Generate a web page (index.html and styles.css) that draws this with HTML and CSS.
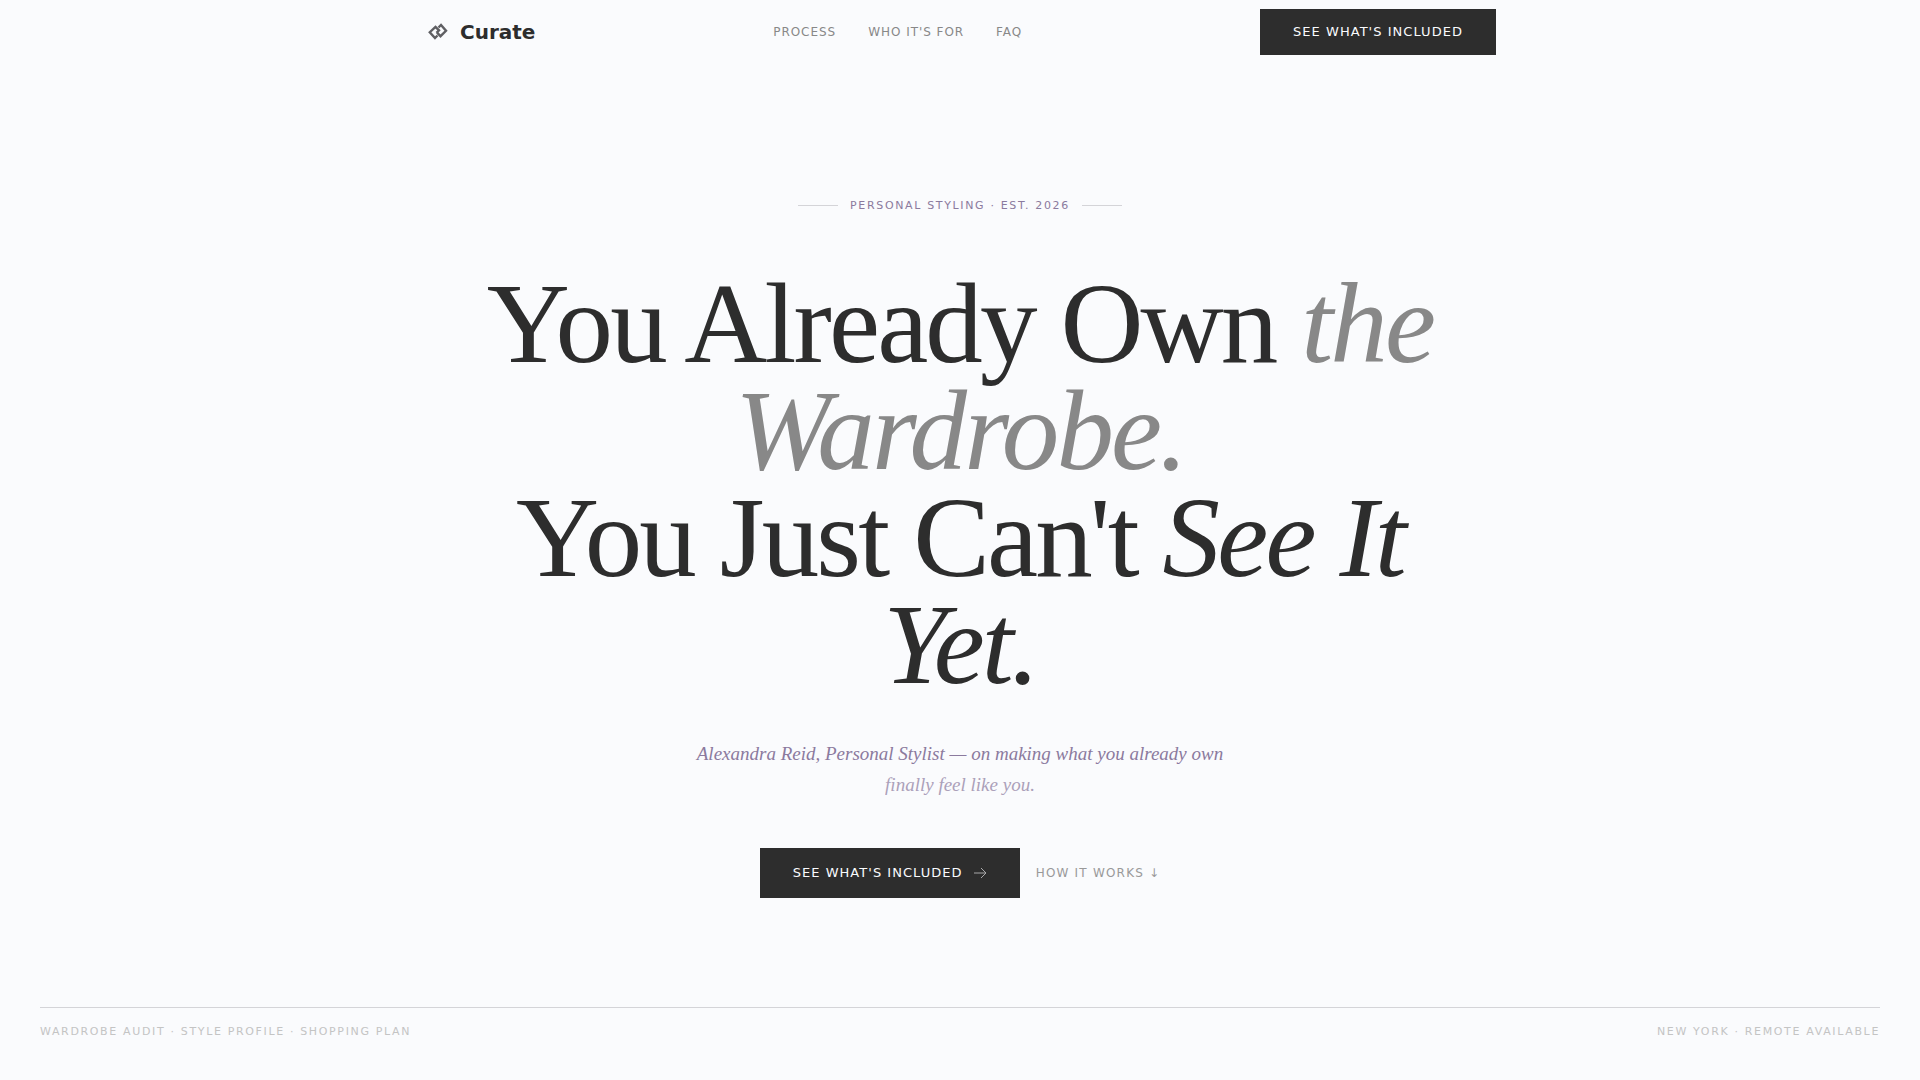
FILE: index.html
```html
<!DOCTYPE html>
<html lang="en">
<head>
  <meta charset="UTF-8">
  <meta name="viewport" content="width=device-width, initial-scale=1.0">
  <title>Curate - Personal Styling</title>
  <link rel="stylesheet" href="styles.css">
</head>
<body>

  <header class="header">
    <div class="header-inner">
      <a href="#" class="logo">
        <svg class="logo-icon" viewBox="0 0 28 28" fill="none" stroke="#5f5f63" stroke-width="2.4" aria-hidden="true">
          <path d="M13.5 17.5 L11 20 L5.8 14.2 L11.5 8.8 L15 12.3 L12.5 14.8"/>
          <path d="M14.5 9.5 L17 7 L22 12.8 L16.5 18.2 L13 14.7"/>
        </svg>
        <span>Curate</span>
      </a>
      <nav class="nav">
        <a href="#process">Process</a>
        <a href="#who">Who it's for</a>
        <a href="#faq">FAQ</a>
      </nav>
      <button type="button" class="btn">See what's included</button>
    </div>
  </header>

  <main class="hero">
    <p class="eyebrow">Personal Styling · Est. 2026</p>
    <h1>You Already Own <em class="muted">the Wardrobe.</em><br>You Just Can't <em>See It Yet.</em></h1>
    <p class="tagline">Alexandra Reid, Personal Stylist — on making what you already own <span>finally feel like you.</span></p>
    <div class="actions">
      <button type="button" class="btn btn-large">
        See what's included
        <svg class="arrow" viewBox="0 0 14 14" fill="none" stroke="currentColor" aria-hidden="true">
          <path d="M1 7 H13 M8 2 L13 7 L8 12"/>
        </svg>
      </button>
      <a href="#process" class="how-link">How it works ↓</a>
    </div>
  </main>

  <footer class="footer">
    <span>Wardrobe Audit · Style Profile · Shopping Plan</span>
    <span>New York · Remote Available</span>
  </footer>

</body>
</html>
```
FILE: styles.css
```css
* {
  box-sizing: border-box;
}

body {
  margin: 0;
  min-height: 100vh;
  display: flex;
  flex-direction: column;
  background-color: #fafbfd;
  color: #2d2d2d;
  font-family: "DejaVu Sans", sans-serif;
}

a {
  color: inherit;
  text-decoration: none;
}

.header-inner {
  display: flex;
  align-items: center;
  justify-content: space-between;
  max-width: 1120px;
  height: 64px;
  margin: 0 auto;
  padding: 0 24px;
}

.logo {
  display: flex;
  align-items: center;
  gap: 8px;
  font-size: 20px;
  font-weight: 700;
}

.logo-icon {
  width: 28px;
  height: 28px;
}

.nav {
  display: flex;
  gap: 32px;
  color: #888888;
  font-size: 12px;
  letter-spacing: 0.08em;
  text-transform: uppercase;
}

.nav a:hover,
.how-link:hover {
  color: #2d2d2d;
}

.btn {
  display: flex;
  align-items: center;
  gap: 10px;
  height: 46px;
  padding: 0 32px;
  border: 1px solid #2d2d2d;
  background-color: #2d2d2d;
  color: #fafbfd;
  font-family: inherit;
  font-size: 13px;
  line-height: 16px;
  letter-spacing: 0.08em;
  text-transform: uppercase;
  cursor: pointer;
}

.btn:hover {
  background-color: #444444;
}

.btn-large {
  height: 50px;
}

.arrow {
  width: 14px;
  height: 14px;
  opacity: 0.6;
}

.hero {
  flex: 1;
  display: flex;
  flex-direction: column;
  align-items: center;
  justify-content: center;
  padding: 24px 24px 0;
  text-align: center;
}

.eyebrow {
  display: flex;
  align-items: center;
  gap: 12px;
  margin: 0 0 56px;
  color: #8b7a9e;
  font-size: 11px;
  line-height: 16px;
  letter-spacing: 0.15em;
  text-transform: uppercase;
}

.eyebrow::before,
.eyebrow::after {
  content: "";
  width: 40px;
  height: 1px;
  background-color: #d4d4d8;
}

h1 {
  max-width: 1000px;
  margin: 0 0 40px;
  font-family: "Liberation Serif", serif;
  font-size: 115px;
  font-weight: 400;
  line-height: 107px;
  letter-spacing: -0.025em;
}

.muted {
  color: #888888;
}

.tagline {
  max-width: 560px;
  margin: 0 0 48px;
  color: #8b7a9e;
  font-family: "Liberation Serif", serif;
  font-size: 19px;
  font-style: italic;
  line-height: 31px;
}

.tagline span {
  opacity: 0.7;
}

.actions {
  display: flex;
  align-items: center;
  gap: 16px;
}

.how-link {
  color: #999999;
  font-size: 12px;
  letter-spacing: 0.1em;
  text-transform: uppercase;
}

.footer {
  display: flex;
  justify-content: space-between;
  margin: 0 40px;
  padding: 16px 0 40px;
  border-top: 1px solid #d4d4d8;
  color: #c4c4c4;
  font-size: 11px;
  line-height: 16px;
  letter-spacing: 0.15em;
  text-transform: uppercase;
}
```
